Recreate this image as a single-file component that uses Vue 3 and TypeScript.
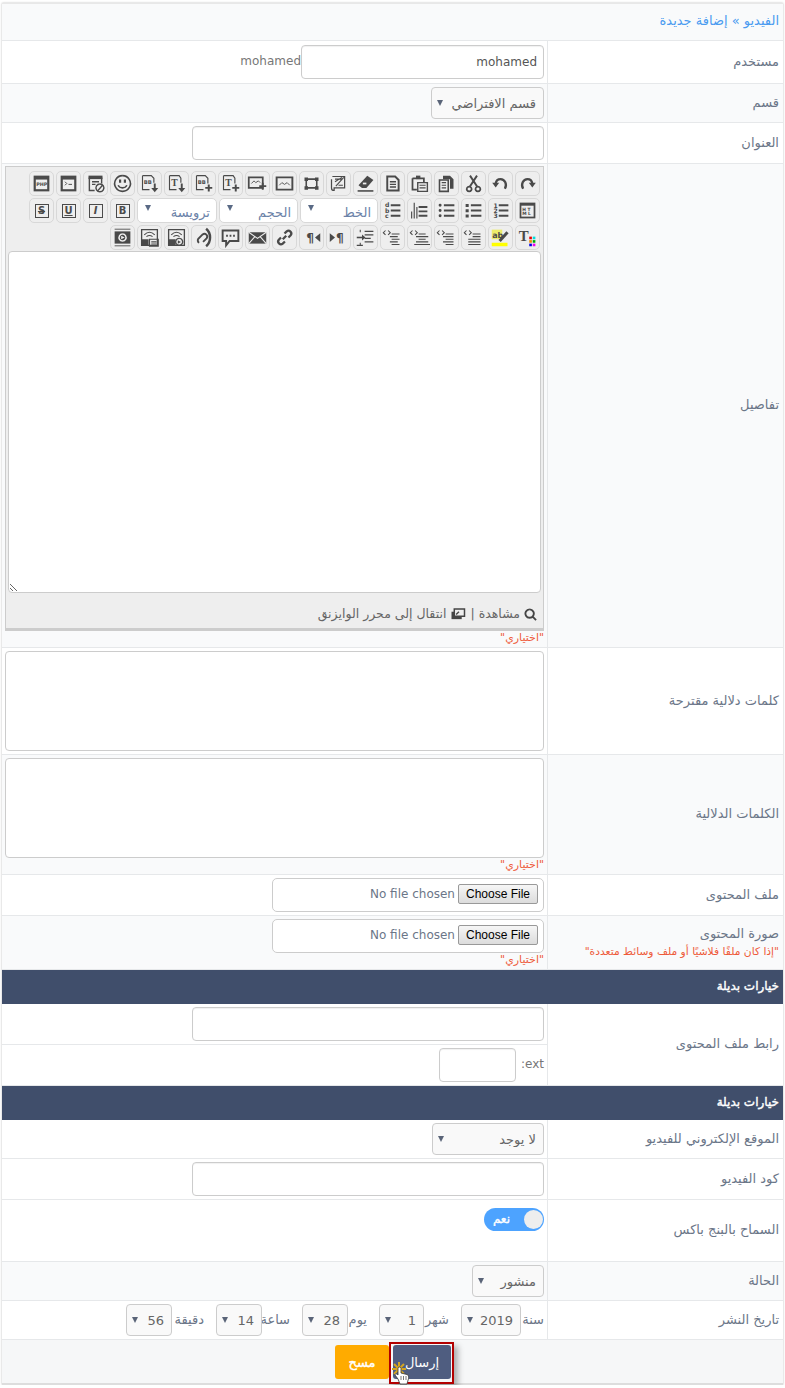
<script setup lang="ts">
import { h } from 'vue'

type Shape = { k: 's' | 'f' | 't' | 'r'; d?: string; w?: number; c?: string; x?: number; y?: number; size?: number; text?: string; rw?: number; rh?: number; serif?: boolean }

const INK = '#4a4a4a'
const S = (d: string, w = 1.6, c = INK): Shape => ({ k: 's', d, w, c })
const F = (d: string, c = INK): Shape => ({ k: 'f', d, c })
const T = (x: number, y: number, size: number, text: string, c = INK, serif = false): Shape => ({ k: 't', x, y, size, text, c, serif })
const R = (x: number, y: number, rw: number, rh: number, c: string): Shape => ({ k: 'r', x, y, rw, rh, c })

const page = 'M6 4h9l4 4v12H6z'
const icons: Record<string, Shape[]> = {
  redo: [S('M7 18C4 13 7 7 12 7c3 0 5 2 5.500 5', 2.6), F('M13.500 11h8l-4 5.500z')],
  undo: [S('M17 18c3-5 0-11-5-11-3 0-5 2-5.500 5', 2.6), F('M2.500 11h8l-4 5.500z')],
  cut: [S('M8 3l8.500 13M16 3L7.500 16', 2.200), S('M7 15.500a2.800 2.800 0 1 0 .1 0M17 15.500a2.800 2.800 0 1 0 .1 0', 2)],
  copy: [S('M4 8h10v13H4z', 1.8), F('M8 3h8l4 4v11h-4V7H8z'), S('M6.500 11h5M6.500 14h5M6.500 17h5', 1.2)],
  paste: [S('M4 6h13v5M4 6v13h5', 2), F('M8 3h5v4H8z'), S('M10 11h11v10H10z', 1.600), S('M12 14h7M12 17h7', 1.2)],
  doc: [S(page, 2.2), S('M9 10h7M9 13h7M9 16h7', 1.5)],
  eraser: [F('M14 3l7 5-8 9H8l-4-3z'), R(9, 11, 4, 2, '#eee'), S('M3 20.500h18', 1.8)],
  script: [S('M5 4h14v13H7v3c-2 0-3-1-3-3V7', 1.4), S('M8 7h8M8 10l8-5M9 15l9-10M12 14h5', 1.3)],
  full: [S('M6 7h12v10H6z', 1.8), F('M4 5h4v4H4zM16 5h4v4h-4zM4 15h4v4H4zM16 15h4v4h-4z')],
  image: [S('M3 5h18v14H3z', 2.2), S('M6 14l3-3 3 2 3-2 3 3', 1)],
  imagep: [S('M2 5h16v12H2z', 2), S('M5 12l3-3 2 2 3-2 2 2', 1), S('M18 11v8M14 15h8', 2.200)],
  tp: [S('M4 3h11l2 3v6M4 3v16h8', 1.3), T(6, 15, 11, 'T', INK, true), S('M18 13v8M14 17h8', 2.200)],
  bbp: [S('M4 3h10l3 3v6M4 3v16h8', 1.3), T(5.500, 12, 6, 'BB'), S('M18 13v8M14 17h8', 2.200)],
  td: [S('M4 3h11l2 3v5M4 3v16h8', 1.3), T(6, 15, 11, 'T', INK, true), S('M18 12v6', 2.200), F('M14 17h8l-4 5z')],
  bbd: [S('M4 3h10l3 3v5M4 3v16h8', 1.3), T(5.500, 12, 6, 'BB'), S('M18 12v6', 2.200), F('M14 17h8l-4 5z')],
  smile: [S('M12 3a9 9 0 1 0 .1 0', 1.8), F('M8 7.500h2.500v3.500H8zM13.500 7.500H16v3.500h-2.500z'), S('M7 14c2 4 8 4 10 0', 1.8)],
  nobb: [F('M4 3h16v4H4z'), S('M5 5v15h6M19 5v7', 1.6), S('M8 10h8M8 13h4', 1.5), S('M17 12.500a4.500 4.500 0 1 0 .1 0M14 21l6-7', 1.6)],
  term: [F('M3 3h18v18H3z'), R(5.500, 7.500, 13, 11, '#eee'), S('M8 10l2 2-2 2M12 13h4', 1.100)],
  php: [F('M3 3h18v18H3z'), R(5.500, 7.500, 13, 11, '#eee'), T(6, 15, 5.500, 'PHP')],
  html: [F('M3 3h18v18H3z'), R(5, 6.500, 14, 12.500, '#eee'), T(6, 12, 5, 'H T'), T(6, 17.500, 5, 'M L')],
  ol: [S('M10 6h11M10 12h11M10 18h11', 2.200), T(4, 9, 7, '1'), T(4, 15, 7, '2'), T(4, 21, 7, '3')],
  ul: [S('M9 6h12M9 12h12M9 18h12', 2.200), F('M3 4.500h3.500v3.500H3zM3 10.500h3.500v3.500H3zM3 16.500h3.500v3.500H3z')],
  ulr: [S('M9 6h12M9 12h12M9 18h12', 2.200), F('M3 6a1.700 1.700 0 1 0 3.400 0 1.700 1.700 0 1 0-3.400 0M3 12a1.700 1.700 0 1 0 3.400 0 1.700 1.700 0 1 0-3.400 0M3 18a1.700 1.700 0 1 0 3.400 0 1.700 1.700 0 1 0-3.400 0')],
  oldot: [S('M11 8h10M11 13h10M11 18h10', 2.200), S('M6 3v18M3 13v8M9 8v13', 1.400, '#555')],
  abc: [S('M10 6h11M10 12h11M10 18h11', 2.200), T(3.500, 8, 7, 'd'), T(3.500, 14.500, 7, 'b'), T(3.500, 21, 7, 'c')],
  color: [T(2, 16, 17, 'T', INK, true), R(14, 11, 3, 3, '#e00'), R(18, 11, 3, 3, '#0dd'), R(14, 15, 3, 3, '#e80'), R(18, 15, 3, 3, '#0a0'), R(14, 19, 3, 3, '#00d'), R(18, 19, 3, 3, '#e0e')],
  hl: [R(2, 3, 12, 11, '#eded6a'), T(2.500, 12, 9, 'ab'), S('M11 16l9-10', 3.400), R(2, 18, 18, 4, '#ff0')],
  a1: [S('M4 4l-2.500 2.500L4 9M7 4l2.500 2.500L7 9', 1.200), S('M11 8h9M11 11h9M6 14h14M6 17h14M6 20h14', 1.400)],
  a2: [S('M4 4l-2.500 2.500L4 9M7 4l2.500 2.500L7 9', 1.200), S('M11 8h9M8 11h12M11 14h9M8 17h12M11 20h9', 1.400)],
  a3: [S('M4 4l-2.500 2.500L4 9M7 4l2.500 2.500L7 9', 1.200), S('M11 8h8M8 11h14M11 14h8M8 17h14M6 20h18', 1.400)],
  a4: [S('M4 4l-2.500 2.500L4 9M7 4l2.500 2.500L7 9', 1.200), S('M11 8h9M9 11h9M11 14h9M9 17h9M11 20h9', 1.400)],
  indent: [S('M11 5h10M11 9h10M11 13h7M11 17h10', 1.700), S('M2 12h7', 1.800), S('M6 3v3M6 18v3M2 21h7', 1.200), F('M8 8.500l4 3.500-4 3.500z')],
  rtl: [T(6, 17, 14, '¶'), F('M22 7v10l-6-5z')],
  ltr: [F('M2 7v10l6-5z'), T(9, 17, 14, '¶')],
  link: [S('M10 14l4-4M8 12l-2.500 2.500a3.200 3.200 0 0 0 4.500 4.500l2.500-2.500M12 7.500L14.500 5a3.200 3.200 0 0 1 4.500 4.500L16.500 12', 2.600)],
  mail: [F('M2 6h20v13H2z'), S('M2 6l10 7 10-7M2 19l7-8M22 19l-7-8', 1.200, '#eee')],
  comment: [S('M3 4h18v12H11l-4 5v-5H3z', 2.200), S('M7 10h2M11 10h2M15 10h2', 2.200)],
  unlink: [S('M7 18a3.200 3.200 0 0 1-1-4.500l5-5a3.200 3.200 0 0 1 4.500 4.500l-4 4', 2.200), S('M15 2c6 5 6 15 0 20', 2.800)],
  imgvid: [S('M3 3h18v18H3z', 1.500), S('M6 9c4-4 8-4 12 0M8.500 11c2-1.500 5-1.500 7 0', 1.300), F('M3 14h8v7H3z'), S('M15 13a4 4 0 1 0 .1 0', 1.500), F('M13.500 15l3.500 2-3.500 2z')],
  imgbox: [S('M3 3h18v18H3z', 1.500), S('M6 9c4-4 8-4 12 0M8.500 11c2-1.500 5-1.500 7 0', 1.300), F('M3 14h8v7H3z'), S('M12 14h10v8H12z', 1.300), S('M14 17h6M14 19.500h6', 1.200)],
  video: [F('M3 5h18v14H3z'), S('M3 2.500h18M3 21.500h18', 1, INK), S('M12 8a4 4 0 1 0 .1 0', 1.700, '#eee'), F('M10.500 10l4 2-4 2z', '#eee')]
}

const Icon = (p: { name: string }) =>
  h('svg', { viewBox: '0 0 24 24', width: 21, height: 21, style: 'display:block;flex:none' },
    icons[p.name].map((s) => {
      if (s.k === 's') return h('path', { d: s.d, fill: 'none', stroke: s.c, 'stroke-width': s.w })
      if (s.k === 'f') return h('path', { d: s.d, fill: s.c })
      if (s.k === 'r') return h('rect', { x: s.x, y: s.y, width: s.rw, height: s.rh, fill: s.c })
      return h('text', {
        x: s.x, y: s.y, 'font-size': s.size, fill: s.c, direction: 'ltr', 'font-weight': 700,
        'font-family': s.serif ? '"Liberation Serif", serif' : '"DejaVu Sans", sans-serif'
      }, s.text)
    }))
Icon.props = ['name']

const row1 = ['redo', 'undo', 'cut', 'copy', 'paste', 'doc', 'eraser', 'script', 'full', 'image', 'imagep', 'tp', 'bbp', 'td', 'bbd', 'smile', 'nobb', 'term', 'php']
const row2a = ['html', 'ol', 'ul', 'ulr', 'oldot', 'abc']
const row3 = ['color', 'hl', 'a1', 'a2', 'a3', 'a4', 'indent', 'ltr', 'rtl', 'link', 'mail', 'comment', 'unlink', 'imgvid', 'imgbox', 'video']
const dropdowns = [
  { label: 'الخط', w: 78 },
  { label: 'الحجم', w: 79 },
  { label: 'ترويسة', w: 80 }
]
const formats = ['B', 'I', 'U', 'S']
const dateParts = [
  { label: 'سنة', value: '2019', w: 60, lw: 22 },
  { label: 'شهر', value: '1', w: 45, lw: 24 },
  { label: 'يوم', value: '28', w: 46, lw: 18 },
  { label: 'ساعة', value: '14', w: 46, lw: 27 },
  { label: 'دقيقة', value: '56', w: 46, lw: 31 }
]
</script>

<template>
  <div class="page" dir="rtl">
    <div class="crumb">الفيديو » إضافة جديدة</div>

    <div class="row h43">
      <div class="label">مستخدم</div>
      <div class="value inline"><input class="field w243" value="mohamed" /><span class="latin">mohamed</span></div>
    </div>
    <div class="row h39 alt">
      <div class="label">قسم</div>
      <div class="value"><span class="sw w113"><select class="sel"><option>قسم الافتراضي</option></select><i class="stri"></i></span></div>
    </div>
    <div class="row h41">
      <div class="label">العنوان</div>
      <div class="value"><input class="field w352" /></div>
    </div>

    <div class="row alt">
      <div class="label">تفاصيل</div>
      <div class="value editor-cell">
        <div class="editor">
          <div class="bar">
            <span v-for="n in row1" :key="n" class="btn"><Icon :name="n" /></span>
          </div>
          <div class="bar">
            <span v-for="n in row2a" :key="n" class="btn"><Icon :name="n" /></span>
            <span v-for="d in dropdowns" :key="d.label" class="drop" :style="{ width: d.w + 'px' }">
              <span>{{ d.label }}</span><i class="tri"></i>
            </span>
            <span v-for="f in formats" :key="f" class="btn">
              <b class="fmt" :class="'fmt-' + f">{{ f }}</b>
            </span>
          </div>
          <div class="bar">
            <span v-for="n in row3" :key="n" class="btn"><Icon :name="n" /></span>
          </div>
          <textarea class="area editor-area"></textarea>
          <div class="ed-foot">
            <svg viewBox="0 0 14 14" width="13" height="13"><path d="M6 1.500a4.500 4.500 0 1 0 .1 0M9.300 9.300L13 13" fill="none" stroke="#444" stroke-width="2" /></svg>
            <span>مشاهدة</span><span>|</span>
            <svg viewBox="0 0 16 14" width="16" height="13"><path d="M1 4h11v8H1z" fill="#444" /><path d="M4 1h11v8H4z" fill="#eee" stroke="#444" stroke-width="1.600" /><path d="M6 7l3-3" stroke="#444" stroke-width="1.500" /></svg>
            <span>انتقال إلى محرر الوايزنق</span>
          </div>
        </div>
        <div class="opt">"اختياري"</div>
      </div>
    </div>

    <div class="row h107">
      <div class="label">كلمات دلالية مقترحة</div>
      <div class="value area-cell"><textarea class="area h100"></textarea></div>
    </div>
    <div class="row alt h120">
      <div class="label">الكلمات الدلالية</div>
      <div class="value area-cell"><textarea class="area h100"></textarea><div class="opt">"اختياري"</div></div>
    </div>
    <div class="row h41">
      <div class="label">ملف المحتوى</div>
      <div class="value"><input class="file" type="file" /></div>
    </div>
    <div class="row alt h54">
      <div class="label">
        <div>صورة المحتوى</div>
        <div class="note">"إذا كان ملفًا فلاشيًا أو ملف وسائط متعددة"</div>
      </div>
      <div class="value"><input class="file" type="file" /><div class="opt">"اختياري"</div></div>
    </div>

    <div class="section">خيارات بديلة</div>

    <div class="row">
      <div class="label">رابط ملف المحتوى</div>
      <div class="stack">
        <div class="value h41"><input class="field w352" /></div>
        <div class="value inline gap"><span class="latin">ext:</span><input class="field w77" /></div>
      </div>
    </div>

    <div class="section">خيارات بديلة</div>

    <div class="row h39">
      <div class="label">الموقع الإلكتروني للفيديو</div>
      <div class="value"><span class="sw w112"><select class="sel"><option>لا يوجد</option></select><i class="stri"></i></span></div>
    </div>
    <div class="row h41">
      <div class="label">كود الفيديو</div>
      <div class="value"><input class="field w352" /></div>
    </div>
    <div class="row h62">
      <div class="label">السماح بالبنج باكس</div>
      <div class="value toggle-cell"><div class="toggle"><span class="knob"></span><span class="strong">نعم</span></div></div>
    </div>
    <div class="row alt h39">
      <div class="label">الحالة</div>
      <div class="value"><span class="sw w72"><select class="sel"><option>منشور</option></select><i class="stri"></i></span></div>
    </div>
    <div class="row h39">
      <div class="label">تاريخ النشر</div>
      <div class="value inline dates">
        <div v-for="p in dateParts" :key="p.label" class="dpart">
          <span class="dl" :style="{ width: p.lw + 'px' }">{{ p.label }}</span>
          <span class="sw" :style="{ width: p.w + 'px' }"><select class="sel"><option>{{ p.value }}</option></select><i class="stri"></i></span>
        </div>
      </div>
    </div>

    <div class="actions">
      <button class="submit" type="button">إرسال</button>
      <button class="clear strong" type="button">مسح</button>
      <span class="mark"></span>
      <svg class="cursor" viewBox="0 0 26 30" width="26" height="30">
        <path d="M3 10h14M5 5l10 10M15 5L5 15M10 3v14" stroke="#d4a520" stroke-width="2" fill="none" />
        <path d="M9 20l-3-4c0-2 2-1 3 0V9.500a1.500 1.500 0 0 1 3 0V14l6 1.500c1.500.5 2 2 1.500 4L18 25h-7z" fill="#fff" stroke="#333" stroke-width=".8" />
        <path d="M12 17v4M14.500 17v4M17 17v4" stroke="#555" stroke-width=".8" />
      </svg>
    </div>
  </div>
</template>

<style>
html, body { margin: 0; background: #fff; }
</style>

<style scoped>
.page {
  width: 781px;
  height: 1382px;
  margin: 3px 0 0 2px;
  box-sizing: border-box;
  border-top: 1px solid #e8e8e8;
  box-shadow: 0 0 2px #bbb;
  background: #fff;
  font: 13px/1.3 "DejaVu Sans", sans-serif;
  color: #6b7688;
  overflow: hidden;
}
.latin { font-size: 12px; color: #777; }
.strong { -webkit-text-stroke: 0.4px currentColor; }
.crumb {
  height: 37px;
  line-height: 34px;
  padding-right: 4px;
  background: #f9fafb;
  color: #4a9bf0;
  border-bottom: 1px solid #e6e8ea;
  box-sizing: border-box;
}
.row {
  display: flex;
  border-bottom: 1px solid #e6e8ea;
  box-sizing: border-box;
}
.alt { background: #f9fafb; }
.h39 { height: 39px; }
.h41 { height: 41px; }
.h43 { height: 43px; }
.h54 { height: 54px; }
.h62 { height: 62px; }
.h107 { height: 107px; }
.h120 { height: 120px; }
.label {
  width: 235px;
  box-sizing: border-box;
  padding-right: 4px;
  flex: none;
  align-self: center;
}
.value {
  flex: 1;
  min-width: 0;
  box-sizing: border-box;
  border-right: 1px solid #e6e8ea;
  padding: 3px 3px 0 0;
}
.inline { display: flex; align-items: center; padding-top: 0; }
.gap { gap: 5px; }
.field {
  height: 34px;
  box-sizing: border-box;
  border: 1px solid #ccc;
  border-radius: 4px;
  background: #fff;
  padding: 0 6px;
  font: 12px "DejaVu Sans", sans-serif;
  color: #555;
  display: block;
  outline: none;
  box-shadow: inset 0 1px 1px rgba(0, 0, 0, 0.06);
}
.w243 { width: 243px; }
.w352 { width: 352px; }
.w77 { width: 77px; }
.sw { position: relative; display: block; flex: none; }
.sel {
  width: 100%;
  height: 32px;
  box-sizing: border-box;
  border: 1px solid #ccc;
  border-radius: 4px;
  background: #f9f9f9;
  appearance: none;
  font: 13px "DejaVu Sans", sans-serif;
  color: #666;
  padding: 0 7px 0 16px;
  display: block;
}
.stri {
  position: absolute;
  left: 6px;
  top: 13px;
  border-left: 3px solid transparent;
  border-right: 3px solid transparent;
  border-top: 6px solid #5a6478;
  pointer-events: none;
}
.w113 { width: 113px; }
.w112 { width: 112px; }
.w72 { width: 72px; }
.editor-cell { padding: 2px 3px 2px 3px; }
.editor {
  height: 465px;
  box-sizing: border-box;
  background: #eee;
  border: 1px solid #ccc;
  border-bottom: 3px solid #ccc;
  padding: 4px 3px 0;
}
.bar { display: flex; gap: 2px; height: 25px; margin-bottom: 2px; }
.btn {
  width: 25px;
  height: 25px;
  box-sizing: border-box;
  border: 1.5px solid #d8d8d8;
  border-radius: 5px;
  display: flex;
  align-items: center;
  justify-content: center;
  flex: none;
}
.fmt {
  width: 14px;
  height: 14px;
  box-sizing: border-box;
  border: 1.5px solid #4a4a4a;
  font: 700 10px/11px "DejaVu Sans", sans-serif;
  color: #4a4a4a;
  text-align: center;
  display: block;
}
.fmt-I { font-style: italic; }
.fmt-U { text-decoration: underline; }
.fmt-S { text-decoration: line-through; }
.drop {
  height: 25px;
  box-sizing: border-box;
  border: 1px solid #d8d8d8;
  border-radius: 5px;
  background: #fff;
  position: relative;
  flex: none;
  color: #6b82a8;
  padding: 4px 6px 0 0;
  line-height: 20px;
}
.tri {
  position: absolute;
  left: 7px;
  top: 6px;
  border-left: 3px solid transparent;
  border-right: 3px solid transparent;
  border-top: 6px solid #5a6a85;
}
.area {
  width: 100%;
  box-sizing: border-box;
  display: block;
  border: 1px solid #ccc;
  border-radius: 4px;
  background: #fff;
  outline: none;
  margin: 0;
  resize: none;
}
.editor-area {
  width: calc(100% + 2px);
  height: 342px;
  margin: -1px -1px 0;
  resize: vertical;
}
.ed-foot {
  display: flex;
  align-items: center;
  gap: 4px;
  height: 33px;
  padding: 9px 3px 0 0;
  color: #666;
  font-size: 12.5px;
  box-sizing: border-box;
}
.opt {
  color: #ee5a3a;
  font-size: 11px;
  line-height: 14px;
}
.area-cell { padding: 3px 3px 0 3px; }
.h100 { height: 100px; }
.file {
  width: 272px;
  height: 34px;
  box-sizing: border-box;
  border: 1px solid #ccc;
  border-radius: 5px;
  padding: 5px;
  font: 12px "DejaVu Sans", sans-serif;
  color: #6b7688;
  background: #fff;
  display: block;
}
.file::file-selector-button {
  font: 12px "Liberation Sans", sans-serif;
  color: #000;
  background: linear-gradient(#f6f6f6, #dcdcdc);
  border: 1px solid #999;
  border-radius: 2px;
  padding: 2px 7px;
  margin-inline-end: 3px;
}
.note { color: #ee5a3a; font-size: 10.7px; margin-top: 2px; }
.section {
  height: 34px;
  line-height: 33px;
  background: #404e6b;
  color: #fff;
  font-size: 12px;
  -webkit-text-stroke: 0.4px #fff;
  padding-right: 4px;
  box-sizing: border-box;
}
.stack { flex: 1; min-width: 0; }
.stack .value:first-child { border-bottom: 1px solid #e6e8ea; }
.stack .value.inline { height: 40px; }
.toggle-cell { padding-top: 8px; }
.toggle {
  width: 60px;
  height: 23px;
  border-radius: 12px;
  background: #4da3ff;
  color: #fff;
  font-size: 12px;
  display: flex;
  align-items: center;
  gap: 14px;
  box-sizing: border-box;
  padding: 0 1px;
}
.knob { width: 19px; height: 19px; border-radius: 50%; background: #eee; flex: none; }
.dates { gap: 12px; }
.dpart { display: flex; align-items: center; gap: 1px; }
.dl { flex: none; white-space: nowrap; }
.actions {
  height: 46px;
  background: #f6f7f8;
  border-bottom: 3px solid #ddd;
  box-sizing: border-box;
  display: flex;
  gap: 4px;
  padding: 5px 332px 0 0;
  position: relative;
}
.submit, .clear {
  height: 34px;
  border: 0;
  border-radius: 3px;
  color: #fff;
  font: 13px "DejaVu Sans", sans-serif;
  padding: 0;
  flex: none;
}
.submit { width: 58px; background: #4f5d80; }
.clear { width: 54px; background: #ffab00; }
.mark {
  position: absolute;
  left: 387px;
  top: 2px;
  width: 65px;
  height: 42px;
  box-sizing: border-box;
  border: 2px solid #b30000;
  box-shadow: 4px 4px 6px rgba(0, 0, 0, 0.3);
  pointer-events: none;
}
.cursor { position: absolute; left: 387px; top: 19px; }
</style>
